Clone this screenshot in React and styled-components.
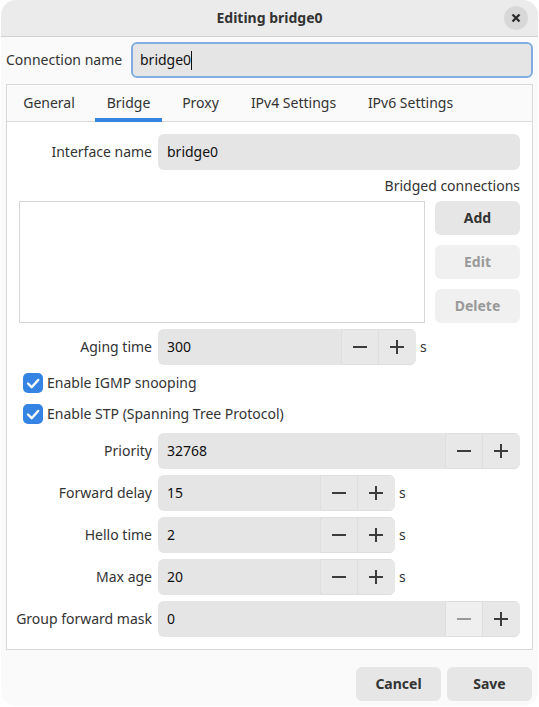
import React, { useState } from "react";
import styled, { createGlobalStyle } from "styled-components";

const GlobalStyle = createGlobalStyle`
  *, *::before, *::after { box-sizing: border-box; }
  body { margin: 0; background: #ffffff; }
  body, button, input {
    font-family: "Noto Sans", sans-serif;
    font-size: 14px;
    line-height: 20px;
    color: #333333;
  }
  button { margin: 0; padding: 0; border: 0; }
`;

const Dialog = styled.form`
  margin: 0 1px;
  background: #fafafa;
  border-radius: 15px;
  overflow: hidden;
`;

const TitleBar = styled.header`
  display: grid;
  grid-template-columns: 24px 1fr 24px;
  align-items: center;
  height: 37px;
  padding: 0 10px;
  background: #ebebeb;
  border-bottom: 1px solid #d0d0d0;
`;

const Title = styled.h1`
  grid-column: 2;
  margin: 0;
  font-size: 14px;
  line-height: 20px;
  font-weight: 700;
  text-align: center;
`;

const CloseButton = styled.button`
  display: grid;
  place-items: center;
  width: 24px;
  height: 24px;
  border-radius: 50%;
  background: #d8d8d8;
`;

const Body = styled.div`
  display: flex;
  flex-direction: column;
  gap: 6px;
  padding: 5px;
`;

const NameRow = styled.div`
  display: grid;
  grid-template-columns: 113px 1fr;
  gap: 12px;
  align-items: center;
  white-space: nowrap;
`;

const TextInput = styled.input`
  width: 100%;
  min-width: 0;
  height: 36px;
  padding: 0 9px 2px;
  border: 0;
  border-radius: 6px;
  outline: 0;
  background: #e5e5e5;
  color: #101010;
`;

const Focused = styled.div`
  display: flex;
  align-items: center;
  height: 36px;
  padding: 0 7px;
  border: 2px solid #81ade3;
  border-radius: 6px;
  background: #e5e5e5;
`;

const NameInput = styled.input`
  field-sizing: content;
  height: 20px;
  padding: 0;
  border: 0;
  outline: 0;
  background: transparent;
  color: #101010;
`;

const Caret = styled.span`
  width: 1px;
  height: 19px;
  background: #101010;
`;

const Notebook = styled.section`
  border: 1px solid #d9d9d9;
  background: #ffffff;
`;

const TabList = styled.div`
  display: grid;
  grid-template-columns: 76px 67px 61px 109px 109px;
  gap: 8px;
  height: 37px;
  padding: 0 4px;
  border-bottom: 1px solid #d9d9d9;
  background: #fafafa;
`;

const Tab = styled.button`
  width: 100%;
  height: 37px;
  padding-top: 2px;
  border-bottom: 4px solid ${(p) => (p["aria-selected"] ? "#3584e4" : "transparent")};
  background: transparent;
  white-space: nowrap;
`;

const Panel = styled.div`
  display: flex;
  flex-direction: column;
  gap: 6px;
  padding: 12px;
`;

const Row = styled.div`
  display: grid;
  grid-template-columns: 133px 1fr;
  gap: 6px;
  align-items: center;
`;

const RowLabel = styled.label`
  display: flex;
  justify-content: flex-end;
  white-space: nowrap;
`;

const Field = styled.div`
  display: flex;
  align-items: center;
  gap: 4px;
`;

const Spin = styled.div`
  display: flex;
  height: 36px;
  width: ${(p) => p.$width || "100%"};
  border-radius: 6px;
  background: #e5e5e5;
  overflow: hidden;
`;

const StepButton = styled.button`
  flex: none;
  display: grid;
  place-items: center;
  width: 37px;
  border: solid #dedede;
  border-width: 1px 0 1px 1px;
  background: #e8e8e8;
  color: #3c3c3c;
  &:last-child { width: 38px; padding-right: 1px; }
  &:disabled { background: #efefef; color: #999999; }
`;

const BridgedHeading = styled.h2`
  margin: 0;
  font-size: 14px;
  line-height: 19px;
  font-weight: 400;
  text-align: right;
`;

const Connections = styled.div`
  display: grid;
  grid-template-columns: 1fr 85px;
  gap: 10px;
`;

const ConnectionList = styled.div`
  border: 1px solid #d6d6d6;
`;

const Stack = styled.div`
  display: flex;
  flex-direction: column;
  gap: 10px;
`;

const PushButton = styled.button`
  height: 34px;
  border-radius: 6px;
  background: #e6e6e6;
  font-weight: 700;
  &:disabled { background: #f0f0f0; color: #999999; }
`;

const Checks = styled.div`
  display: flex;
  flex-direction: column;
  gap: 11px;
  padding: 2px 4px 3px;
`;

const CheckLabel = styled.label`
  display: flex;
  gap: 4px;
  align-items: center;
`;

const CheckBox = styled.span`
  display: grid;
  width: 20px;
  height: 20px;
  > * { grid-area: 1 / 1; }
  svg { pointer-events: none; }
`;

const CheckInput = styled.input`
  appearance: none;
  width: 20px;
  height: 20px;
  margin: 0;
  border-radius: 5px;
  background: #d0d0d0;
  &:checked { background: #3584e4; }
`;

const Footer = styled.footer`
  display: grid;
  grid-template-columns: 85px 85px;
  justify-content: end;
  gap: 6px;
  padding: 12px 6px 5px;
`;

function SpinField({ id, label, initial, width, unit, min = 0 }) {
  const [value, setValue] = useState(initial);
  return (
    <Row>
      <RowLabel htmlFor={id}>{label}</RowLabel>
      <Field>
        <Spin $width={width}>
          <TextInput id={id} inputMode="numeric" value={value} onChange={(e) => setValue(Number(e.target.value) || 0)} />
          <StepButton type="button" aria-label={`Decrease ${label}`} disabled={value <= min} onClick={() => setValue(value - 1)}>
            <svg width="14" height="14" viewBox="0 0 14 14"><path d="M0 7h14" stroke="currentColor" strokeWidth="2" /></svg>
          </StepButton>
          <StepButton type="button" aria-label={`Increase ${label}`} onClick={() => setValue(value + 1)}>
            <svg width="14" height="14" viewBox="0 0 14 14"><path d="M0 7h14M7 0v14" stroke="currentColor" strokeWidth="2" /></svg>
          </StepButton>
        </Spin>
        {unit && <span>{unit}</span>}
      </Field>
    </Row>
  );
}

function Check({ children }) {
  return (
    <CheckLabel>
      <CheckBox>
        <CheckInput type="checkbox" defaultChecked />
        <svg width="20" height="20" viewBox="0 0 20 20" fill="none">
          <path d="M5 10.5l3.7 3.7L15.2 7" stroke="#ffffff" strokeWidth="2.4" strokeLinecap="round" strokeLinejoin="round" />
        </svg>
      </CheckBox>
      {children}
    </CheckLabel>
  );
}

const TABS = ["General", "Bridge", "Proxy", "IPv4 Settings", "IPv6 Settings"];

export default function App() {
  const [tab, setTab] = useState("Bridge");
  return (
    <>
      <GlobalStyle />
      <Dialog onSubmit={(e) => e.preventDefault()}>
        <TitleBar>
          <Title>Editing bridge0</Title>
          <CloseButton type="button" aria-label="Close">
            <svg width="10" height="10" viewBox="0 0 10 10"><path d="M1.5 1.5l7 7M8.5 1.5l-7 7" stroke="#2e2e2e" strokeWidth="2.4" /></svg>
          </CloseButton>
        </TitleBar>
        <Body>
          <NameRow>
            <label htmlFor="connection">Connection name</label>
            <Focused>
              <NameInput id="connection" defaultValue="bridge0" />
              <Caret />
            </Focused>
          </NameRow>
          <Notebook>
            <TabList role="tablist">
              {TABS.map((name) => (
                <Tab key={name} type="button" role="tab" aria-selected={tab === name} onClick={() => setTab(name)}>
                  {name}
                </Tab>
              ))}
            </TabList>
            <Panel role="tabpanel">
              <Row>
                <RowLabel htmlFor="interface">Interface name</RowLabel>
                <TextInput id="interface" defaultValue="bridge0" />
              </Row>
              <BridgedHeading>Bridged connections</BridgedHeading>
              <Connections>
                <ConnectionList />
                <Stack>
                  <PushButton type="button">Add</PushButton>
                  <PushButton type="button" disabled>Edit</PushButton>
                  <PushButton type="button" disabled>Delete</PushButton>
                </Stack>
              </Connections>
              <SpinField id="aging" label="Aging time" initial={300} width="258px" unit="s" />
              <Checks>
                <Check>Enable IGMP snooping</Check>
                <Check>Enable STP (Spanning Tree Protocol)</Check>
              </Checks>
              <SpinField id="priority" label="Priority" initial={32768} />
              <SpinField id="forward" label="Forward delay" initial={15} width="237px" unit="s" />
              <SpinField id="hello" label="Hello time" initial={2} width="237px" unit="s" />
              <SpinField id="age" label="Max age" initial={20} width="237px" unit="s" />
              <SpinField id="mask" label="Group forward mask" initial={0} />
            </Panel>
          </Notebook>
        </Body>
        <Footer>
          <PushButton type="button">Cancel</PushButton>
          <PushButton type="submit">Save</PushButton>
        </Footer>
      </Dialog>
    </>
  );
}
